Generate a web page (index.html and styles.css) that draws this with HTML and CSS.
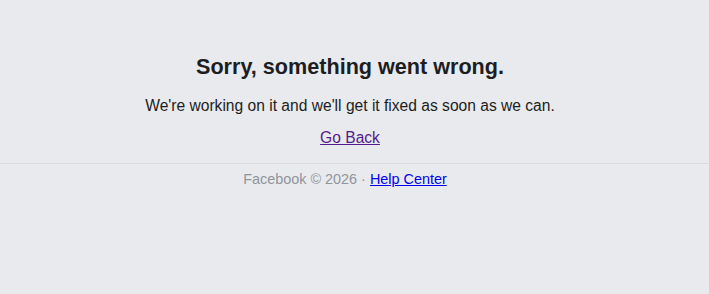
FILE: index.html
```html
<!DOCTYPE html>
<html>
<head>
<meta charset="utf-8">
<link rel="stylesheet" href="styles.css">
</head>
<body>
<main class="error">
  <h1 class="error-title">Sorry, something went wrong.</h1>
  <p class="error-text">We're working on it and we'll get it fixed as soon as we can.</p>
  <p class="error-back"><a class="back-link" href="#">Go Back</a></p>
</main>
<footer class="footer">
  <span class="footer-copy">Facebook © 2026 · </span><a class="footer-link" href="#">Help Center</a>
</footer>
</body>
</html>
```

FILE: styles.css
```css
html, body {
  margin: 0;
  padding: 0;
  background: #e9eaee;
  font-family: "Liberation Sans", Arial, sans-serif;
}
.error {
  text-align: center;
  padding-top: 54px;
  padding-right: 9px;
  padding-bottom: 15px;
  border-bottom: 1px solid #dadde1;
}
.error-title {
  margin: 0;
  font-size: 21.6px;
  font-weight: bold;
  color: #1c1e21;
  line-height: 26px;
}
.error-text {
  margin: 16px 0 0;
  font-size: 15.6px;
  color: #1c1e21;
  line-height: 20px;
}
.error-back {
  margin: 12px 0 0;
  font-size: 15.6px;
  line-height: 20px;
}
.back-link {
  color: #551a8b;
}
.footer {
  text-align: center;
  padding-top: 6px;
  padding-right: 19px;
  font-size: 14.4px;
  line-height: 18px;
}
.footer-copy {
  color: #90949c;
}
.footer-link {
  color: #0000ee;
}
```
